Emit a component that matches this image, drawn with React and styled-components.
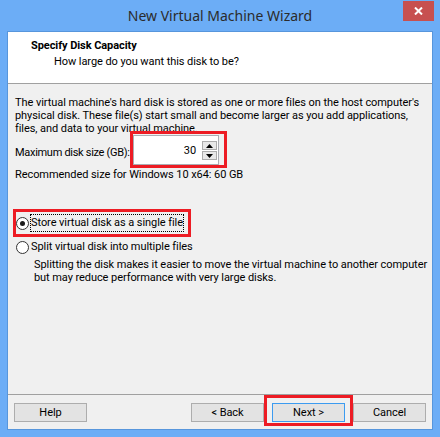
import React from "react";
import styled, { createGlobalStyle } from "styled-components";

const Global = createGlobalStyle`
  html, body { margin: 0; padding: 0; background: #6cadf6; }
  body {
    font-family: Roboto, "Liberation Sans", sans-serif;
    font-size: 11px;
    letter-spacing: -0.07px;
    color: #000;
  }
`;

const Frame = styled.div`
  width: 440px;
  height: 437px;
  box-sizing: border-box;
  background: #6cadf6;
  padding: 0 7px 7px 7px;
  display: flex;
  flex-direction: column;
`;

const TitleBar = styled.div`
  height: 31px;
  display: grid;
  grid-template-columns: 1fr auto 1fr;
  align-items: start;
`;

const Title = styled.div`
  grid-column: 2;
  font-family: "Noto Sans", "Open Sans", sans-serif;
  font-size: 14px;
  letter-spacing: 0;
  color: #2b2b2b;
  line-height: 16px;
  padding-top: 8px;
  white-space: nowrap;
`;

const Close = styled.div`
  grid-column: 3;
  justify-self: end;
  margin: 1px -1px 0 0;
  width: 31px;
  height: 20px;
  background: #c75050;
  display: flex;
  align-items: center;
  justify-content: center;
`;

const Client = styled.div`
  flex: 1;
  border: 1px solid #5796dc;
  background: #f0f0f0;
  display: flex;
  flex-direction: column;
  min-height: 0;
`;

const Header = styled.div`
  flex: none;
  height: 52px;
  box-sizing: border-box;
  background: #fff;
  border-bottom: 1px solid #a0a0a0;
  padding: 6px 0 0 23px;
`;

const HeadTitle = styled.div`
  font-weight: bold;
  line-height: 16px;
`;

const HeadSub = styled.div`
  padding-left: 23px;
  line-height: 16px;
`;

const Body = styled.div`
  flex: 1;
  padding: 12px 7px 0 7px;
  display: flex;
  flex-direction: column;
  white-space: nowrap;
`;

const Para = styled.p`
  margin: ${(p) => p.$mt || 0}px 0 0 0;
  line-height: 13px;
  padding-left: ${(p) => p.$indent || 0}px;
`;

const SizeRow = styled.div`
  display: flex;
  align-items: flex-start;
  margin-top: -4px;
  height: 37px;
`;

const SizeLabel = styled.span`
  width: 115px;
  letter-spacing: -0.3px;
  line-height: 13px;
  padding-top: 15px;
`;

const Highlight = styled.div`
  border: 3px solid #ed1c24;
  box-sizing: border-box;
  display: flex;
`;

const SpinHighlight = styled(Highlight)`
  width: 97px;
  height: 37px;
  padding: 1px 5px 0 0;
  align-items: flex-start;
`;

const Spin = styled.div`
  width: 86px;
  height: 30px;
  box-sizing: border-box;
  border: 1px solid #abadb3;
  background: #fff;
  display: flex;
  align-items: center;
  justify-content: flex-end;
  padding: 1px 1px 0 0;
`;

const SpinValue = styled.span`
  margin-right: 6px;
  line-height: 13px;
`;

const SpinBtns = styled.div`
  display: flex;
  flex-direction: column;
  gap: 1px;
`;

const SpinBtn = styled.div`
  width: 15px;
  height: 9px;
  box-sizing: border-box;
  border: 1px solid #acacac;
  background: #e8e8e8;
  display: flex;
  align-items: center;
  justify-content: center;
`;

const RadioHighlight = styled(Highlight)`
  margin: 28px 0 0 -2px;
  align-self: flex-start;
  height: 28px;
  padding-right: 4px;
  align-items: center;
`;

const RadioRow = styled.label`
  display: flex;
  align-items: center;
  gap: 1px;
  margin-top: ${(p) => p.$mt || 0}px;
  margin-left: ${(p) => p.$ml || 0}px;
`;

const RadioCircle = styled.span`
  flex: none;
  width: 13px;
  height: 13px;
  box-sizing: border-box;
  border-radius: 50%;
  border: 1px solid #333;
  background: #fff;
  display: flex;
  align-items: center;
  justify-content: center;
  &::after {
    content: "";
    display: ${(p) => (p.$checked ? "block" : "none")};
    width: 5px;
    height: 5px;
    border-radius: 50%;
    background: #1a1a1a;
  }
`;

const RadioText = styled.span`
  line-height: 14px;
  padding: 1px 0;
  border: 1px ${(p) => (p.$focus ? "dotted #000" : "solid transparent")};
`;

const Spacer = styled.div`
  flex: 1;
`;

const Footer = styled.div`
  flex: none;
  border-top: 1px solid #a0a0a0;
  height: 34px;
  display: flex;
  align-items: flex-start;
  padding: 0 6px;
`;

const Button = styled.div`
  flex: none;
  width: 73px;
  height: 19px;
  box-sizing: border-box;
  border: 1px solid ${(p) => (p.$primary ? "#3c9bf0" : "#adadad")};
  background: #e3e3e3;
  display: flex;
  align-items: center;
  justify-content: center;
  line-height: 13px;
  margin-top: ${(p) => p.$mt || 0}px;
`;

const Buttons = styled.div`
  margin-left: auto;
  display: flex;
  align-items: flex-start;
`;

const NextHighlight = styled(Highlight)`
  width: 89px;
  height: 31px;
  padding: 5px 0 0 5px;
`;

const Arrow = ({ up }) => (
  <svg width="7" height="4" viewBox="0 0 7 4">
    {up ? <path d="M3.5 0 L7 4 L0 4 Z" fill="#000" /> : <path d="M0 0 L7 0 L3.5 4 Z" fill="#000" />}
  </svg>
);

export default function App() {
  return (
    <>
      <Global />
      <Frame>
        <TitleBar>
          <Title>New Virtual Machine Wizard</Title>
          <Close>
            <svg width="9" height="8" viewBox="0 0 9 8">
              <path d="M1 0.5 L8 7.5 M8 0.5 L1 7.5" stroke="#fff" strokeWidth="2" />
            </svg>
          </Close>
        </TitleBar>
        <Client>
          <Header>
            <HeadTitle>Specify Disk Capacity</HeadTitle>
            <HeadSub>How large do you want this disk to be?</HeadSub>
          </Header>
          <Body>
            <Para>
              The virtual machine's hard disk is stored as one or more files on the host computer's
              <br />
              physical disk. These file(s) start small and become larger as you add applications,
              <br />
              files, and data to your virtual machine.
            </Para>
            <SizeRow>
              <SizeLabel>Maximum disk size (GB):</SizeLabel>
              <SpinHighlight>
                <Spin>
                  <SpinValue>30</SpinValue>
                  <SpinBtns>
                    <SpinBtn><Arrow up /></SpinBtn>
                    <SpinBtn><Arrow /></SpinBtn>
                  </SpinBtns>
                </Spin>
              </SpinHighlight>
            </SizeRow>
            <Para>Recommended size for Windows 10 x64: 60 GB</Para>
            <RadioHighlight>
              <RadioRow>
                <RadioCircle $checked />
                <RadioText $focus>Store virtual disk as a single file</RadioText>
              </RadioRow>
            </RadioHighlight>
            <RadioRow $mt={1} $ml={1}>
              <RadioCircle />
              <RadioText>Split virtual disk into multiple files</RadioText>
            </RadioRow>
            <Para $indent={19} $mt={2}>
              Splitting the disk makes it easier to move the virtual machine to another computer
              <br />
              but may reduce performance with very large disks.
            </Para>
            <Spacer />
          </Body>
          <Footer>
            <Button $mt={8}>Help</Button>
            <Buttons>
              <Button $mt={8}>&lt; Back</Button>
              <NextHighlight>
                <Button $primary>Next &gt;</Button>
              </NextHighlight>
              <Button $mt={8}>Cancel</Button>
            </Buttons>
          </Footer>
        </Client>
      </Frame>
    </>
  );
}
